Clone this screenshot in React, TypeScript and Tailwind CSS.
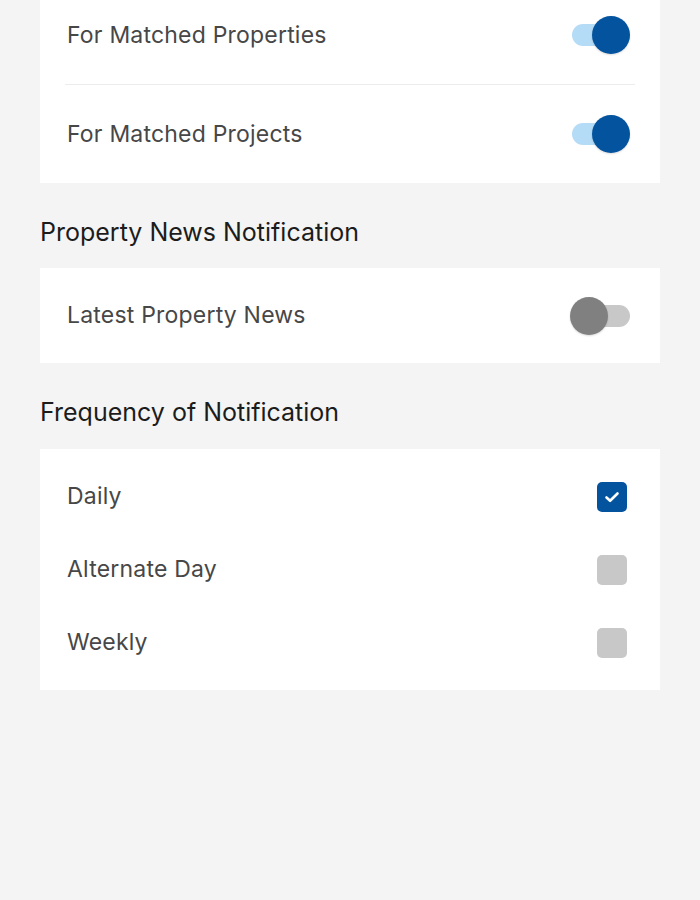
import React from "react";

function Toggle({ on }: { on: boolean }) {
  return (
    <div className="relative w-[60px] h-[38px] flex items-center">
      <div className={`w-[58px] h-[22px] rounded-full ${on ? "bg-[#b5dcf6]" : "bg-[#c8c8c8]"} ml-[2px]`} />
      <div
        className={`absolute top-0 w-[38px] h-[38px] rounded-full ${on ? "right-0 bg-[#03539f]" : "left-0 bg-[#808080]"} shadow-[0_1px_2px_rgba(0,0,0,0.15)]`}
      />
    </div>
  );
}

function Check({ on }: { on: boolean }) {
  return (
    <div className={`w-[30px] h-[30px] rounded-[5px] flex items-center justify-center ${on ? "bg-[#03539f]" : "bg-[#c8c8c8]"}`}>
      {on && (
        <svg width="18" height="18" viewBox="0 0 18 18" fill="none">
          <path d="M3.5 9.5l3.6 3.3L14.5 5.5" stroke="white" strokeWidth="2.6" strokeLinecap="round" strokeLinejoin="round" />
        </svg>
      )}
    </div>
  );
}

export default function App() {
  const font = { fontFamily: "Inter, 'Noto Sans', sans-serif" };
  return (
    <div className="min-h-[900px] bg-[#f4f4f4] px-[40px] overflow-hidden" style={font}>
      <div className="bg-white mt-[-14px]">
        <div className="h-[98px] flex items-center justify-between pl-[27px] pr-[30px]">
          <span className="text-[23px] tracking-[0.2px] text-[#474747]">For Matched Properties</span>
          <Toggle on />
        </div>
        <div className="h-px bg-[#ececec] mx-[25px]" />
        <div className="h-[98px] flex items-center justify-between pl-[27px] pr-[30px]">
          <span className="text-[23px] tracking-[0.2px] text-[#474747]">For Matched Projects</span>
          <Toggle on />
        </div>
      </div>

      <h2 className="mt-[33px] mb-[20px] h-[32px] leading-[32px] text-[25px] text-[#1c1c1c]">Property News Notification</h2>
      <div className="bg-white h-[95px] flex items-center justify-between pl-[27px] pr-[30px]">
        <span className="text-[23px] tracking-[0.2px] text-[#474747]">Latest Property News</span>
        <Toggle on={false} />
      </div>

      <h2 className="mt-[33px] mb-[21px] h-[32px] leading-[32px] text-[25px] text-[#1c1c1c]">Frequency of Notification</h2>
      <div className="bg-white py-[11px]">
        {[
          ["Daily", true],
          ["Alternate Day", false],
          ["Weekly", false],
        ].map(([label, on]) => (
          <div key={label as string} className="h-[73px] flex items-center justify-between pl-[27px] pr-[33px]">
            <span className="text-[23px] tracking-[0.2px] text-[#474747]">{label as string}</span>
            <Check on={on as boolean} />
          </div>
        ))}
      </div>
    </div>
  );
}
